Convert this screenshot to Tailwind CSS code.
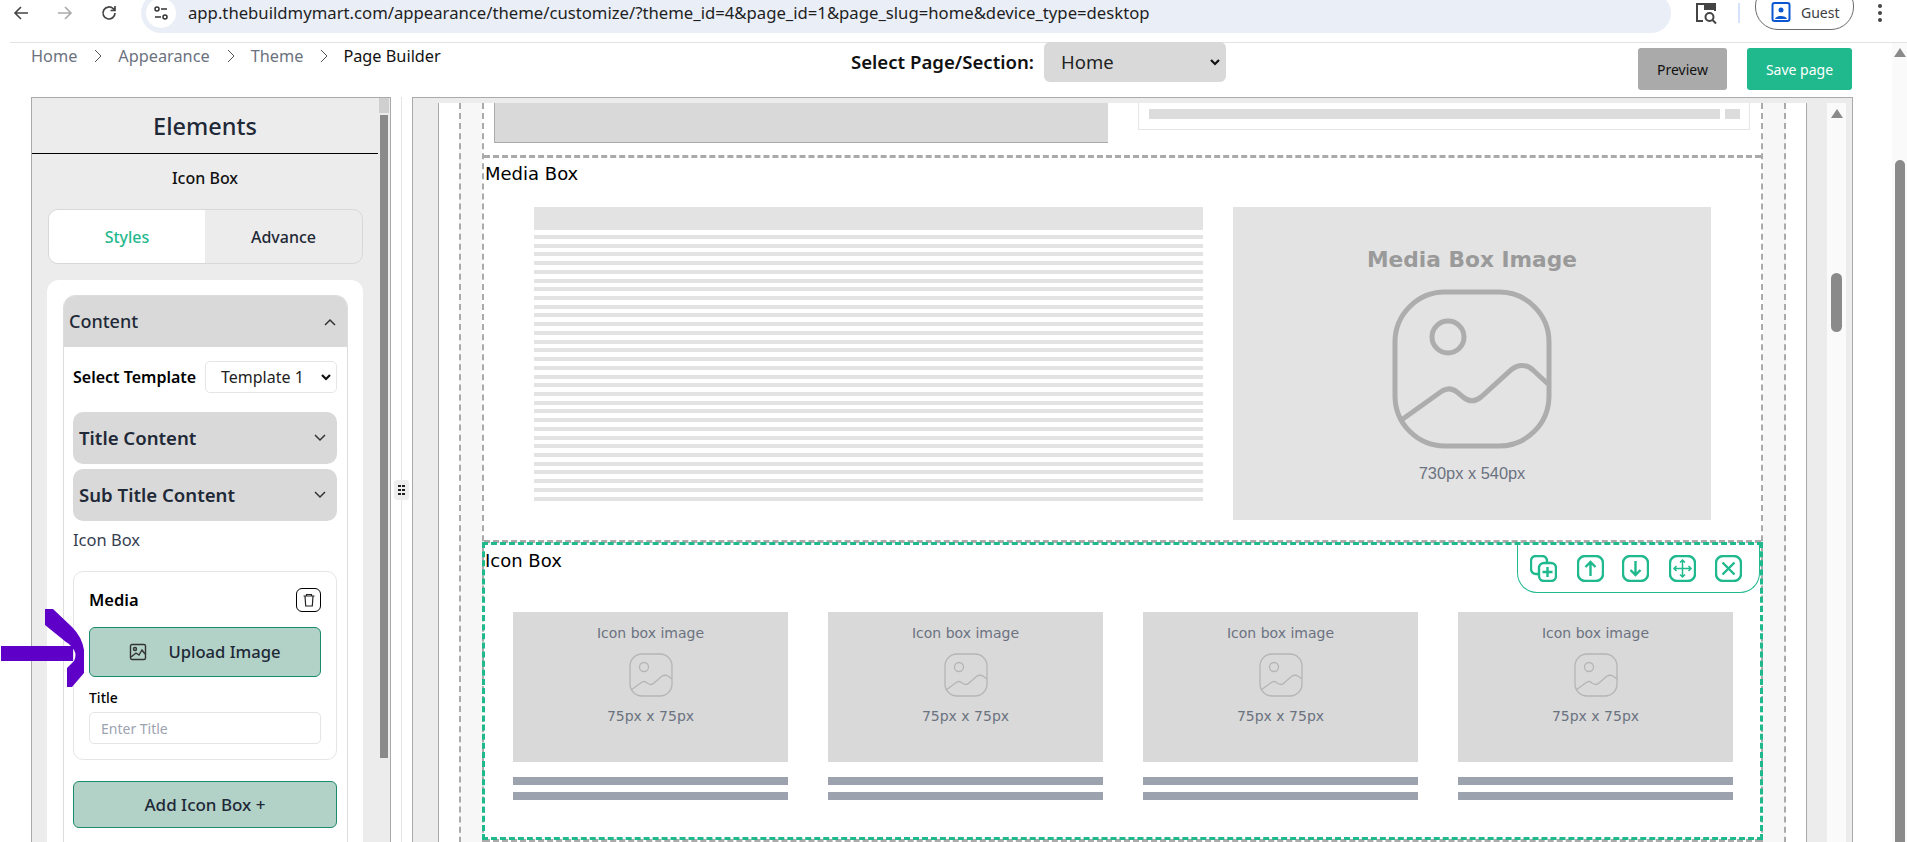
<!DOCTYPE html>
<html><head><meta charset="utf-8"><script src="https://cdn.jsdelivr.net/npm/@tailwindcss/browser@4"></script></head>
<body class="bg-white overflow-hidden">
<div class="relative w-[1907px] h-[842px] overflow-hidden flex flex-col font-['Noto_Sans',sans-serif] text-black">

<!-- browser toolbar -->
<div class="h-[43px] shrink-0 flex items-start border-b border-[#e3e3e3] ml-[10px] relative">
  <div class="flex items-center gap-[26px] pl-[2px] h-[25px] text-[#5f6368]">
    <svg class="w-[18px] h-[18px]" viewBox="0 0 18 18" fill="none" stroke="#444" stroke-width="1.6"><path d="M16 9H3M9 3 3 9l6 6"/></svg>
    <svg class="w-[18px] h-[18px]" viewBox="0 0 18 18" fill="none" stroke="#aaa" stroke-width="1.6"><path d="M2 9h13M9 3l6 6-6 6"/></svg>
    <svg class="w-[18px] h-[18px]" viewBox="0 0 18 18" fill="none" stroke="#444" stroke-width="1.7"><path d="M15 9a6 6 0 1 1-1.8-4.3L15 6.5M15 2v4.500h-4.500"/></svg>
  </div>
  <div class="ml-[23px] -mt-[7px] w-[1530px] h-[40px] bg-[#e9eef7] rounded-[20px] flex items-center pl-[5px] gap-[12px]">
    <div class="w-[30px] h-[30px] rounded-full bg-white flex items-center justify-center">
      <svg class="w-[16px] h-[16px]" viewBox="0 0 16 16" fill="none" stroke="#333" stroke-width="1.5"><circle cx="4" cy="4" r="2"/><path d="M8 4h6M2 12h6"/><circle cx="12" cy="12" r="2"/></svg>
    </div>
    <span class="text-[16.700px] text-[#1f1f1f] whitespace-nowrap">app.thebuildmymart.com/appearance/theme/customize/?theme_id=4&amp;page_id=1&amp;page_slug=home&amp;device_type=desktop</span>
  </div>
  <div class="ml-[23px] h-[26px] flex items-center">
    <svg class="w-[24px] h-[24px]" viewBox="0 0 24 24" fill="none" stroke="#444" stroke-width="2"><path d="M9 20H3V3h18v7"/><path d="M11 3h10v5H11z" fill="#444"/><circle cx="15.500" cy="16" r="4"/><path d="m18.500 19 3.500 3.500"/></svg>
    <div class="ml-[20px] w-[2px] h-[20px] bg-[#d6e2fb]"></div>
    <div class="ml-[15px] -mt-[14px] w-[99px] h-[47px] border border-[#6b6b6b] rounded-[23px] flex items-center pl-[15px] pt-[12px] gap-[10px]">
      <svg class="w-[20px] h-[20px]" viewBox="0 0 20 20"><rect x="1.500" y="1" width="17" height="18" rx="2" fill="none" stroke="#0b57d0" stroke-width="2"/><circle cx="10" cy="8" r="2.500" fill="#0b57d0"/><path d="M4 17c1-4 11-4 12 0z" fill="#0b57d0"/></svg>
      <span class="text-[14px] text-[#3c4043]">Guest</span>
    </div>
    <div class="ml-[24px] flex flex-col gap-[3px]">
      <div class="w-[4px] h-[4px] rounded-full bg-[#444]"></div><div class="w-[4px] h-[4px] rounded-full bg-[#444]"></div><div class="w-[4px] h-[4px] rounded-full bg-[#444]"></div>
    </div>
  </div>
</div>

<!-- page -->
<div class="flex-1 min-h-0 flex">
  <div class="w-[1892px] shrink-0 flex flex-col">
    <!-- header -->
    <div class="h-[54px] shrink-0 relative flex items-start pl-[31px]">
      <div class="flex items-center h-[26px] text-[16.300px] text-[#6b7280]">
        <span>Home</span>
        <svg class="w-[10px] h-[14px] ml-[16px] mr-[15px]" viewBox="0 0 10 14" fill="none" stroke="#555" stroke-width="1"><path d="m2 1 6 6-6 6"/></svg>
        <span>Appearance</span>
        <svg class="w-[10px] h-[14px] ml-[16px] mr-[15px]" viewBox="0 0 10 14" fill="none" stroke="#555" stroke-width="1"><path d="m2 1 6 6-6 6"/></svg>
        <span>Theme</span>
        <svg class="w-[10px] h-[14px] ml-[16px] mr-[14px]" viewBox="0 0 10 14" fill="none" stroke="#555" stroke-width="1"><path d="m2 1 6 6-6 6"/></svg>
        <span class="text-[#111]">Page Builder</span>
      </div>
      <div class="absolute left-[851px] top-[-1px] flex items-center gap-[9px]">
        <span class="w-[184px] whitespace-nowrap text-[18.600px] font-semibold text-[#111]">Select Page/Section:</span>
        <div class="w-[182px] h-[40px] bg-[#d9d9d9] rounded-[6px] flex items-center justify-between pl-[17px] pr-[5px] text-[18.500px] text-[#222]">
          <span>Home</span>
          <svg class="w-[12px] h-[12px]" viewBox="0 0 12 12" fill="none" stroke="#111" stroke-width="2.200"><path d="m2 4 4 4 4-4"/></svg>
        </div>
      </div>
      <div class="absolute left-[1638px] top-[5px] flex gap-[20px] text-[14px]">
        <div class="w-[89px] h-[42px] bg-[#aaaaaa] rounded-[3px] flex items-center justify-center text-[#111]">Preview</div>
        <div class="w-[105px] h-[42px] bg-[#1fb98d] rounded-[3px] flex items-center justify-center text-white">Save page</div>
      </div>
    </div>

    <!-- main -->
    <div class="flex-1 min-h-0 flex pl-[31px]">
      <!-- left panel -->
      <div class="w-[360px] shrink-0 border-x border-t border-[#aaa] bg-[#ececec] flex overflow-hidden">
        <div class="w-[346px] shrink-0">
          <div class="h-[56px] pt-[2px] border-b border-black flex items-center justify-center text-[23.500px] font-medium text-[#1f2937]">Elements</div>
          <div class="h-[48px] flex items-center justify-center text-[16px] font-medium text-[#111]">Icon Box</div>
          <div class="mt-[7px] ml-[16px] w-[315px] h-[55px] flex border border-[#d8d8d8] rounded-[10px] overflow-hidden text-[16px] font-medium">
            <div class="w-[156px] bg-white flex items-center justify-center text-[#1fb98d]">Styles</div>
            <div class="flex-1 flex items-center justify-center text-[#1f2937]">Advance</div>
          </div>
          <div class="mt-[16px] ml-[15px] w-[316px] h-[600px] bg-white rounded-[12px] pt-[15px] px-[16px]">
            <div class="w-[285px] border border-[#ddd] rounded-[12px] overflow-hidden h-[600px]">
              <div class="h-[51px] bg-[#d9d9d9] flex items-center justify-between pl-[5px] pr-[10px] text-[18px] font-medium text-[#1f2937]">
                <span>Content</span>
                <svg class="w-[14px] h-[14px]" viewBox="0 0 14 14" fill="none" stroke="#333" stroke-width="1.500"><path d="m2 10 5-5 5 5"/></svg>
              </div>
              <div class="pl-[9px] pr-[10px]">
                <div class="mt-[14px] flex items-center justify-between">
                  <span class="text-[16px] font-semibold whitespace-nowrap">Select Template</span>
                  <div class="w-[132px] h-[32px] border border-[#e5e5e5] rounded-[5px] flex items-center justify-between pl-[15px] pr-[4px] text-[16px] text-[#222]">
                    <span>Template 1</span>
                    <svg class="w-[12px] h-[12px]" viewBox="0 0 12 12" fill="none" stroke="#111" stroke-width="2.200"><path d="m2 4 4 4 4-4"/></svg>
                  </div>
                </div>
                <div class="mt-[19px] h-[52px] bg-[#d9d9d9] rounded-[10px] flex items-center justify-between pl-[6px] pr-[10px] text-[18.600px] font-semibold text-[#1f2937]">
                  <span>Title Content</span>
                  <svg class="w-[14px] h-[14px]" viewBox="0 0 14 14" fill="none" stroke="#333" stroke-width="1.500"><path d="m2 4 5 5 5-5"/></svg>
                </div>
                <div class="mt-[5px] h-[52px] bg-[#d9d9d9] rounded-[10px] flex items-center justify-between pl-[6px] pr-[10px] text-[18.600px] font-semibold text-[#1f2937]">
                  <span>Sub Title Content</span>
                  <svg class="w-[14px] h-[14px]" viewBox="0 0 14 14" fill="none" stroke="#333" stroke-width="1.500"><path d="m2 4 5 5 5-5"/></svg>
                </div>
                <div class="mt-[7px] h-[24px] flex items-center text-[16.500px] text-[#374151]">Icon Box</div>
                <div class="mt-[19px] h-[189px] border border-[#e5e5e5] rounded-[10px] px-[15px] pt-[15px]">
                  <div class="flex items-center justify-between h-[26px]">
                    <span class="text-[16.500px] font-semibold">Media</span>
                    <div class="w-[25px] h-[24px] border border-black rounded-[6px] flex items-center justify-center">
                      <svg class="w-[16px] h-[16px]" viewBox="0 0 16 16" fill="none" stroke="#222" stroke-width="1.200"><path d="M2.500 4h11M5.500 4V2.500h5V4M4 4l.7 10h6.600L12 4"/></svg>
                    </div>
                  </div>
                  <div class="mt-[14px] h-[50px] bg-[#b2d2c7] border border-[#1c8a6b] rounded-[6px] flex items-center justify-center gap-[21px] text-[16.600px] font-medium text-[#1f2937]">
                    <svg class="w-[18px] h-[18px]" viewBox="0 0 18 18" fill="none" stroke="#333" stroke-width="1.400"><rect x="1.500" y="1.500" width="15" height="15" rx="1.500"/><circle cx="6" cy="6" r="1.500"/><path d="m2 14 5-4 3 2 3-5 3 4"/></svg>
                    <span>Upload Image</span>
                  </div>
                  <div class="mt-[10px] h-[20px] flex items-center text-[14px] font-medium">Title</div>
                  <div class="mt-[5px] h-[32px] border border-[#e5e5e5] rounded-[5px] flex items-center pl-[11px] text-[14px] text-[#9ca3af]">Enter Title</div>
                </div>
                <div class="mt-[21px] h-[47px] bg-[#b2d2c7] border border-[#1c8a6b] rounded-[6px] flex items-center justify-center text-[17px] font-medium text-[#1f2937]">Add Icon Box +</div>
              </div>
            </div>
          </div>
        </div>
        <!-- panel scrollbar -->
        <div class="w-[12px] shrink-0 flex flex-col items-center">
          <div class="w-[10px] h-[15px] bg-[#cfcfcf]"></div>
          <div class="w-[8px] h-[643px] mt-[2px] bg-[#8a8a8a]"></div>
        </div>
      </div>

      <!-- resizer -->
      <div class="w-[21px] shrink-0 relative flex justify-center">
        <div class="w-px h-full bg-[#e5e5e5]"></div>
        <div class="absolute left-[3px] top-[383px] w-[15px] h-[20px] bg-[#eeeeee] rounded-[3px] grid grid-cols-2 gap-[1.500px] content-center px-[4px]">
          <div class="w-[2.500px] h-[2.500px] bg-[#222]"></div><div class="w-[2.500px] h-[2.500px] bg-[#222]"></div>
          <div class="w-[2.500px] h-[2.500px] bg-[#222]"></div><div class="w-[2.500px] h-[2.500px] bg-[#222]"></div>
          <div class="w-[2.500px] h-[2.500px] bg-[#222]"></div><div class="w-[2.500px] h-[2.500px] bg-[#222]"></div>
        </div>
      </div>

      <!-- right panel -->
      <div class="w-[1441px] shrink-0 border-x border-t border-[#aaa] bg-[#ececec] flex pt-[5px] pl-[25px]">
        <div class="w-[1369px] shrink-0 h-[800px] bg-white border-x border-[#aaa] px-[20px]">
          <div class="h-full bg-[#f7f7f7] border-x-2 border-dashed border-[#aaa] px-[21px]">
            <div class="h-full bg-white border-x-2 border-dashed border-[#aaa] flex flex-col">
              <!-- previous section -->
              <div class="h-[52px] shrink-0 bg-white flex items-start pl-[10px]">
                <div class="w-[614px] h-[40px] bg-[#d9d9d9] border-l border-b border-[#aaa]"></div>
                <div class="ml-[30px] w-[612px] h-[27px] border-x border-b border-[#e5e5e5] flex items-start gap-[5px] pl-[10px] pt-[6px]">
                  <div class="w-[571px] h-[10px] bg-[#dcdcdc]"></div>
                  <div class="w-[15px] h-[10px] bg-[#dcdcdc]"></div>
                </div>
              </div>
              <!-- media box -->
              <div class="h-[388px] shrink-0 border-y-[3px] border-dashed border-[#aaa]">
                <div class="pl-[1px] pt-[2px] text-[18px] leading-[28px] font-['DejaVu_Sans',sans-serif]">Media Box</div>
                <div class="pl-[50px] mt-[19px] flex gap-[30px]">
                  <div class="w-[669px] shrink-0">
                    <div class="h-[23px] bg-[#e3e3e3]"></div>
                    <div class="mt-[5px] h-[266px] flex flex-col justify-between">
                      <div class="h-1 bg-[#e3e3e3]"></div><div class="h-1 bg-[#e3e3e3]"></div><div class="h-1 bg-[#e3e3e3]"></div><div class="h-1 bg-[#e3e3e3]"></div><div class="h-1 bg-[#e3e3e3]"></div><div class="h-1 bg-[#e3e3e3]"></div><div class="h-1 bg-[#e3e3e3]"></div><div class="h-1 bg-[#e3e3e3]"></div><div class="h-1 bg-[#e3e3e3]"></div><div class="h-1 bg-[#e3e3e3]"></div><div class="h-1 bg-[#e3e3e3]"></div><div class="h-1 bg-[#e3e3e3]"></div><div class="h-1 bg-[#e3e3e3]"></div><div class="h-1 bg-[#e3e3e3]"></div><div class="h-1 bg-[#e3e3e3]"></div><div class="h-1 bg-[#e3e3e3]"></div><div class="h-1 bg-[#e3e3e3]"></div><div class="h-1 bg-[#e3e3e3]"></div><div class="h-1 bg-[#e3e3e3]"></div><div class="h-1 bg-[#e3e3e3]"></div><div class="h-1 bg-[#e3e3e3]"></div><div class="h-1 bg-[#e3e3e3]"></div><div class="h-1 bg-[#e3e3e3]"></div><div class="h-1 bg-[#e3e3e3]"></div><div class="h-1 bg-[#e3e3e3]"></div><div class="h-1 bg-[#e3e3e3]"></div><div class="h-1 bg-[#e3e3e3]"></div><div class="h-1 bg-[#e3e3e3]"></div><div class="h-1 bg-[#e3e3e3]"></div><div class="h-1 bg-[#e3e3e3]"></div><div class="h-1 bg-[#e3e3e3]"></div>
                    </div>
                  </div>
                  <div class="w-[478px] h-[313px] bg-[#e3e3e3] flex flex-col items-center pt-[38px]">
                    <div class="h-[30px] leading-[30px] text-[21.700px] font-bold text-[#9a9a9a] font-['DejaVu_Sans',sans-serif]">Media Box Image</div>
                    <svg class="w-[160px] h-[160px] mt-[14px]" viewBox="0 0 160 160" fill="none" stroke="#adadad" stroke-width="5"><rect x="3" y="3" width="154" height="154" rx="50"/><circle cx="56" cy="48" r="16"/><path d="M8 132l42-30c5-3 10-3 15 1l6 5c6 5 12 5 18 0l30-27c7-6 15-6 22 0l15 14"/></svg>
                    <div class="mt-[12px] text-[16.400px] leading-[24px] text-[#6b7280] font-['Liberation_Sans',sans-serif]">730px x 540px</div>
                  </div>
                </div>
              </div>
              <!-- icon box -->
              <div class="h-[298px] shrink-0 -mx-[2px] -mt-[1px] border-[3px] border-dashed border-[#1fb98d] relative">
                <div class="pt-[2px] text-[18px] leading-[28px] font-['DejaVu_Sans',sans-serif]">Icon Box</div>
                <div class="absolute right-0 top-0 w-[243px] h-[48px] border border-t-0 border-[#1fb98d] rounded-b-[20px] bg-white flex items-center gap-[20px] pl-[12px]">
                  <svg class="w-[27px] h-[27px]" viewBox="0 0 27 27" fill="none" stroke="#1fb98d" stroke-width="2.400"><path d="M8 19H6a5 5 0 0 1-5-5V6a5 5 0 0 1 5-5h6a5 5 0 0 1 5 5v1"/><rect x="9" y="8" width="17" height="18" rx="5"/><path d="M17.500 12v10M12.500 17h10"/></svg>
                  <svg class="w-[27px] h-[27px]" viewBox="0 0 27 27" fill="none" stroke="#1fb98d" stroke-width="2.400"><rect x="1" y="1" width="25" height="25" rx="7"/><path d="M13.500 21V7M8.500 12l5-5 5 5"/></svg>
                  <svg class="w-[27px] h-[27px] -ml-[2px]" viewBox="0 0 27 27" fill="none" stroke="#1fb98d" stroke-width="2.400"><rect x="1" y="1" width="25" height="25" rx="7"/><path d="M13.500 6v14M8.500 15l5 5 5-5"/></svg>
                  <svg class="w-[27px] h-[27px]" viewBox="0 0 27 27" fill="none" stroke="#1fb98d" stroke-width="2.400"><rect x="1" y="1" width="25" height="25" rx="7"/><path stroke-width="1.500" d="M13.500 5v17M5 13.500h17M11 7.500l2.500-2.500 2.500 2.500M11 19.500l2.500 2.500 2.500-2.500M7.500 11 5 13.500 7.500 16M19.500 11l2.500 2.500-2.500 2.500"/></svg>
                  <svg class="w-[27px] h-[27px] -ml-[1px]" viewBox="0 0 27 27" fill="none" stroke="#1fb98d" stroke-width="2.400"><rect x="1" y="1" width="25" height="25" rx="7"/><path d="m7.500 7.500 12 12M19.500 7.500l-12 12"/></svg>
                </div>
                <div class="mt-[37px] ml-[28px] grid grid-cols-[275px_275px_275px_275px] gap-x-[40px]">
                  <div>
                    <div class="h-[150px] bg-[#d9d9d9] flex flex-col items-center pt-[10px] text-[#6b7280] text-[14px] font-['DejaVu_Sans',sans-serif]">
                      <div class="leading-[22px]">Icon box image</div>
                      <svg class="w-[44px] h-[44px] mt-[9px]" viewBox="0 0 44 44" fill="none" stroke="#b5b5b5" stroke-width="1.300"><rect x="1" y="1" width="42" height="42" rx="12"/><circle cx="15" cy="14" r="4.500"/><path d="M2 37l11-8c2-1 3-1 5 1l2 1c2 1 3 1 5-1l8-7c2-1 4-1 6 0l4 3"/></svg>
                      <div class="mt-[8px] leading-[22px]">75px x 75px</div>
                    </div>
                    <div class="mt-[15px] h-[8px] bg-[#9ca3af]"></div><div class="mt-[7px] h-[8px] bg-[#9ca3af]"></div>
                  </div>
                  <div>
                    <div class="h-[150px] bg-[#d9d9d9] flex flex-col items-center pt-[10px] text-[#6b7280] text-[14px] font-['DejaVu_Sans',sans-serif]">
                      <div class="leading-[22px]">Icon box image</div>
                      <svg class="w-[44px] h-[44px] mt-[9px]" viewBox="0 0 44 44" fill="none" stroke="#b5b5b5" stroke-width="1.300"><rect x="1" y="1" width="42" height="42" rx="12"/><circle cx="15" cy="14" r="4.500"/><path d="M2 37l11-8c2-1 3-1 5 1l2 1c2 1 3 1 5-1l8-7c2-1 4-1 6 0l4 3"/></svg>
                      <div class="mt-[8px] leading-[22px]">75px x 75px</div>
                    </div>
                    <div class="mt-[15px] h-[8px] bg-[#9ca3af]"></div><div class="mt-[7px] h-[8px] bg-[#9ca3af]"></div>
                  </div>
                  <div>
                    <div class="h-[150px] bg-[#d9d9d9] flex flex-col items-center pt-[10px] text-[#6b7280] text-[14px] font-['DejaVu_Sans',sans-serif]">
                      <div class="leading-[22px]">Icon box image</div>
                      <svg class="w-[44px] h-[44px] mt-[9px]" viewBox="0 0 44 44" fill="none" stroke="#b5b5b5" stroke-width="1.300"><rect x="1" y="1" width="42" height="42" rx="12"/><circle cx="15" cy="14" r="4.500"/><path d="M2 37l11-8c2-1 3-1 5 1l2 1c2 1 3 1 5-1l8-7c2-1 4-1 6 0l4 3"/></svg>
                      <div class="mt-[8px] leading-[22px]">75px x 75px</div>
                    </div>
                    <div class="mt-[15px] h-[8px] bg-[#9ca3af]"></div><div class="mt-[7px] h-[8px] bg-[#9ca3af]"></div>
                  </div>
                  <div>
                    <div class="h-[150px] bg-[#d9d9d9] flex flex-col items-center pt-[10px] text-[#6b7280] text-[14px] font-['DejaVu_Sans',sans-serif]">
                      <div class="leading-[22px]">Icon box image</div>
                      <svg class="w-[44px] h-[44px] mt-[9px]" viewBox="0 0 44 44" fill="none" stroke="#b5b5b5" stroke-width="1.300"><rect x="1" y="1" width="42" height="42" rx="12"/><circle cx="15" cy="14" r="4.500"/><path d="M2 37l11-8c2-1 3-1 5 1l2 1c2 1 3 1 5-1l8-7c2-1 4-1 6 0l4 3"/></svg>
                      <div class="mt-[8px] leading-[22px]">75px x 75px</div>
                    </div>
                    <div class="mt-[15px] h-[8px] bg-[#9ca3af]"></div><div class="mt-[7px] h-[8px] bg-[#9ca3af]"></div>
                  </div>
                </div>
              </div>
              <div class="-mt-[1px] shrink-0 h-[3px] border-t-[3px] border-dashed border-[#aaa]"></div>
            </div>
          </div>
        </div>
        <!-- canvas scrollbar -->
        <div class="ml-[20px] w-[19px] h-[800px] bg-[#fafafa] flex flex-col items-center pt-[6px]">
          <div class="w-0 h-0 border-x-[6px] border-x-transparent border-b-[9px] border-b-[#8a8a8a]"></div>
          <div class="mt-[155px] w-[11px] h-[59px] rounded-full bg-[#8a8a8a]"></div>
        </div>
      </div>
    </div>
  </div>
  <!-- page scrollbar -->
  <div class="w-[15px] shrink-0 bg-[#fafafa] flex flex-col items-center pt-[5px]">
    <div class="w-0 h-0 border-x-[6px] border-x-transparent border-b-[9px] border-b-[#8a8a8a]"></div>
    <div class="mt-[103px] w-[10px] flex-1 rounded-t-full bg-[#8a8a8a]"></div>
  </div>
</div>

<!-- annotation arrow -->
<svg class="absolute left-0 top-[605px] w-[90px] h-[90px]" viewBox="0 0 90 90" fill="#5f00c8"><path d="M1 41h72v15H1z"/><path d="M45 4h8l19 18q10 10 12 23v23L72 82h-5V63l7-7q3-6 0-11q-4-6-8-8L45 20z"/></svg>
</div>
</body></html>
